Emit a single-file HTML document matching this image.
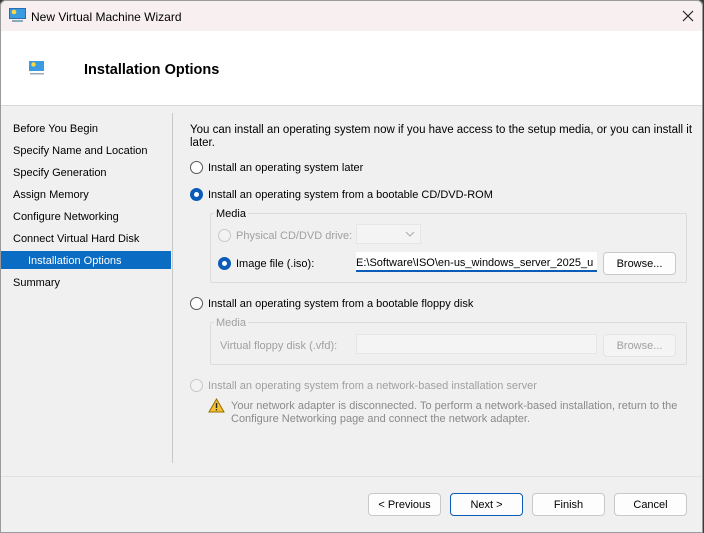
<!DOCTYPE html>
<html><head><meta charset="utf-8"><style>
*{margin:0;padding:0;box-sizing:border-box}
body{width:704px;height:533px;overflow:hidden;background:#3a3a3a;font-family:"Liberation Sans",sans-serif;font-size:11px;color:#000;position:relative}
.win{position:absolute;left:0;top:0;width:703px;height:533px;background:#f0f0f0;border-radius:6px 6px 0 0;overflow:hidden}
.a{position:absolute;white-space:nowrap}
.t{margin-top:1px}
.title{position:absolute;left:0;top:0;width:100%;height:31px;background:#f8f0f0}
.hdr{position:absolute;left:0;top:31px;width:100%;height:75px;background:#fff;border-bottom:1px solid #d8d8d8}
.rad{position:absolute;width:13px;height:13px;border-radius:50%;border:1px solid #555;background:#fff}
.rad.on{border:4px solid #0a5cb8;background:#fff}
.rad.dis{border-color:#c8c8c8;background:#f3f3f3}
.btn{position:absolute;height:23px;border:1px solid #c9c9c9;border-radius:4px;background:#fdfdfd;text-align:center;line-height:23px}
.grp{position:absolute;border:1px solid #dcdcdc;border-radius:2px}
.gray{color:#a0a0a0}
</style></head><body>
<div class="win">
<div class="title">
<svg class="a" style="left:9px;top:8px" width="17" height="15" viewBox="0 0 17 15"><rect x="0.5" y="0.5" width="16" height="10" fill="#3a9be0" stroke="#2a6cb0"/><circle cx="5" cy="4" r="2.3" fill="#ffd83a"/><rect x="3" y="12" width="11" height="2" fill="#8ab"/></svg>
<div class="a" style="left:31px;top:10px;font-size:12px">New Virtual Machine Wizard</div>
<svg class="a" style="left:682px;top:10px" width="12" height="12"><path d="M1 1L11 11M11 1L1 11" stroke="#222" stroke-width="1.2"/></svg>
</div>
<div class="hdr">
<svg class="a" style="left:29px;top:30px" width="16" height="14" viewBox="0 0 16 14"><rect x="0" y="0" width="15" height="10" fill="#3a9be0"/><circle cx="4.5" cy="3.5" r="2.2" fill="#ffd83a"/><rect x="1" y="12" width="14" height="1.5" fill="#9ab"/></svg>
<div class="a" style="left:84px;top:31px;font-size:14.5px;font-weight:bold">Installation Options</div>
</div>
<div class="a" style="left:172px;top:113px;width:1px;height:350px;background:#c8c8c8"></div>
<div class="a t" style="left:13px;top:122px">Before You Begin</div>
<div class="a t" style="left:13px;top:144px">Specify Name and Location</div>
<div class="a t" style="left:13px;top:166px">Specify Generation</div>
<div class="a t" style="left:13px;top:188px">Assign Memory</div>
<div class="a t" style="left:13px;top:210px">Configure Networking</div>
<div class="a t" style="left:13px;top:232px">Connect Virtual Hard Disk</div>
<div class="a" style="left:1px;top:251px;width:170px;height:18px;background:#0a6cc2"></div>
<div class="a t" style="left:28px;top:254px;color:#fff">Installation Options</div>
<div class="a t" style="left:13px;top:276px">Summary</div>

<div class="a t" style="left:190px;top:123px;line-height:13px;font-size:11.5px">You can install an operating system now if you have access to the setup media, or you can install it<br>later.</div>
<div class="rad" style="left:190px;top:161px"></div>
<div class="a t" style="left:208px;top:161px">Install an operating system later</div>
<div class="rad on" style="left:190px;top:188px"></div>
<div class="a t" style="left:208px;top:188px">Install an operating system from a bootable CD/DVD-ROM</div>

<div class="grp" style="left:210px;top:213px;width:477px;height:70px"></div>
<div class="a" style="left:214px;top:208px;background:#f0f0f0;padding:0 2px">Media</div>
<div class="rad dis" style="left:218px;top:229px"></div>
<div class="a gray t" style="left:236px;top:229px">Physical CD/DVD drive:</div>
<div class="a" style="left:356px;top:224px;width:65px;height:20px;background:#f4f4f4;border:1px solid #e6e6e6"></div>
<svg class="a" style="left:405px;top:231px" width="10" height="6"><path d="M1 1L5 5L9 1" fill="none" stroke="#aaa"/></svg>
<div class="rad on" style="left:218px;top:257px"></div>
<div class="a t" style="left:236px;top:257px">Image file (.iso):</div>
<div class="a" style="left:356px;top:252px;width:241px;height:20px;background:#fff;border-bottom:2px solid #0a5cb8;overflow:hidden"><span class="a" style="left:0;top:5px">E:\Software\ISO\en-us_windows_server_2025_u</span></div>
<div class="btn" style="left:603px;top:252px;width:73px">Browse...</div>

<div class="rad" style="left:190px;top:297px"></div>
<div class="a t" style="left:208px;top:297px">Install an operating system from a bootable floppy disk</div>
<div class="grp" style="left:210px;top:322px;width:477px;height:43px"></div>
<div class="a gray" style="left:214px;top:317px;background:#f0f0f0;padding:0 2px">Media</div>
<div class="a gray t" style="left:220px;top:339px">Virtual floppy disk (.vfd):</div>
<div class="a" style="left:356px;top:334px;width:241px;height:20px;background:#f4f4f4;border:1px solid #e6e6e6"></div>
<div class="btn gray" style="left:603px;top:334px;width:73px;background:#f4f4f4;border-color:#e4e4e4">Browse...</div>

<div class="rad dis" style="left:190px;top:379px"></div>
<div class="a gray t" style="left:208px;top:379px">Install an operating system from a network-based installation server</div>
<svg class="a" style="left:208px;top:398px" width="17" height="15" viewBox="0 0 17 15"><path d="M8.5 1L16 14H1Z" fill="#f2c230" stroke="#9a6a00"/><rect x="7.8" y="5" width="1.4" height="5" fill="#222"/><rect x="7.8" y="11" width="1.4" height="1.4" fill="#222"/></svg>
<div class="a gray t" style="left:231px;top:399px;line-height:13px;color:#8a8a8a">Your network adapter is disconnected. To perform a network-based installation, return to the<br>Configure Networking page and connect the network adapter.</div>

<div class="a" style="left:0;top:476px;width:100%;height:1px;background:#e2e2e2"></div>
<div class="btn" style="left:368px;top:493px;width:73px">&lt; Previous</div>
<div class="btn" style="left:450px;top:493px;width:73px;border-color:#0a5cb8">Next &gt;</div>
<div class="btn" style="left:532px;top:493px;width:73px">Finish</div>
<div class="btn" style="left:614px;top:493px;width:73px">Cancel</div>
</div>
<div class="a" style="left:0;top:0;width:703px;height:533px;border:1px solid #9a9a9a;border-radius:6px 6px 0 0;pointer-events:none"></div>
</body></html>
